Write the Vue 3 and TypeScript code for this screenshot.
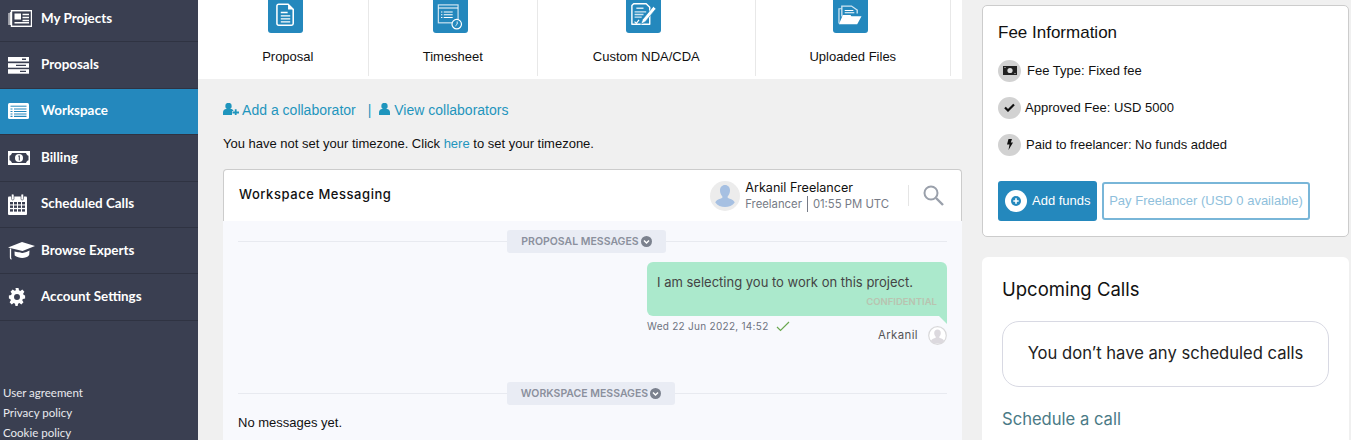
<script setup lang="ts">
const navItems = [
  { label: 'My Projects', icon: 'projects' },
  { label: 'Proposals', icon: 'proposals' },
  { label: 'Workspace', icon: 'workspace', active: true },
  { label: 'Billing', icon: 'billing' },
  { label: 'Scheduled Calls', icon: 'calendar' },
  { label: 'Browse Experts', icon: 'cap' },
  { label: 'Account Settings', icon: 'gear' },
]
const tabs = [
  { label: 'Proposal', icon: 'doc', cls: 'tab-a' },
  { label: 'Timesheet', icon: 'sheet', cls: 'tab-b' },
  { label: 'Custom NDA/CDA', icon: 'nda', cls: 'tab-c' },
  { label: 'Uploaded Files', icon: 'files', cls: 'tab-d' },
]
</script>

<template>
  <div class="page">
    <aside class="sidebar">
      <nav class="nav">
        <a v-for="item in navItems" :key="item.label" class="nav-item" :class="{ active: item.active }">
          <span class="nav-icon">
            <svg v-if="item.icon === 'projects'" width="24" height="17" viewBox="0 0 24 17">
              <rect x="3.5" y="0.7" width="20" height="15.6" fill="none" stroke="#fff" stroke-width="1.4" />
              <path d="M1 3v12M2.4 2v13" stroke="#fff" stroke-width="1" />
              <rect x="6.5" y="3.5" width="6.5" height="6" fill="#fff" />
              <path d="M14.5 4.5h6.5M14.5 7.5h6.5M14.5 10.5h6.5M6.5 12.8h14.5" stroke="#fff" stroke-width="1.5" />
            </svg>
            <svg v-else-if="item.icon === 'proposals'" width="22" height="17" viewBox="0 0 22 17">
              <rect y="0" width="21" height="4.5" fill="#fff" />
              <rect y="6.2" width="21" height="4.5" fill="#fff" />
              <rect y="12.2" width="21" height="4.5" fill="#fff" />
              <path d="M14 2.2h4M8 8.4h10M12 14.4h6" stroke="#3a3f51" stroke-width="1.4" />
            </svg>
            <svg v-else-if="item.icon === 'workspace'" width="21" height="16" viewBox="0 0 21 16">
              <rect width="21" height="16" rx="1.5" fill="#fff" />
              <path d="M2.5 3.2h16" stroke="#2488bd" stroke-width="1" />
              <path d="M6 6h12.5M6 8.5h12.5M6 11h12.5M6 13.3h12.5M2.5 6h2M2.5 8.5h2M2.5 11h2M2.5 13.3h2" stroke="#2488bd" stroke-width="1.2" />
            </svg>
            <svg v-else-if="item.icon === 'billing'" width="22" height="14" viewBox="0 0 22 14">
              <rect width="22" height="14" fill="#fff" />
              <path d="M4 2h14c.4 1.5 1.5 2.500 2.500 2.800v4.400c-1 .3-2.100 1.300-2.500 2.800H4c-.4-1.500-1.500-2.500-2.500-2.800V4.800C2.500 4.500 3.600 3.500 4 2z" fill="#3a3f51" />
              <circle cx="11" cy="7" r="4" fill="#fff" />
              <path d="M10.300 5.200l1-.5v4.800" stroke="#3a3f51" stroke-width="1" fill="none" />
            </svg>
            <svg v-else-if="item.icon === 'calendar'" width="19" height="21" viewBox="0 0 19 21">
              <rect y="2.500" width="19" height="18.500" rx="1" fill="#fff" />
              <rect x="3.500" y="0" width="2.500" height="6" rx="1.200" fill="#fff" stroke="#3a3f51" stroke-width=".6" />
              <rect x="13" y="0" width="2.500" height="6" rx="1.200" fill="#fff" stroke="#3a3f51" stroke-width=".6" />
              <g fill="#3a3f51">
                <rect x="2" y="8" width="3" height="2.400" /><rect x="6" y="8" width="3" height="2.400" /><rect x="10" y="8" width="3" height="2.400" /><rect x="14" y="8" width="3" height="2.400" />
                <rect x="2" y="11.500" width="3" height="2.400" /><rect x="6" y="11.500" width="3" height="2.400" /><rect x="10" y="11.500" width="3" height="2.400" /><rect x="14" y="11.500" width="3" height="2.400" />
                <rect x="2" y="15.200" width="3" height="2.400" /><rect x="6" y="15.200" width="3" height="2.400" /><rect x="10" y="15.200" width="3" height="2.400" /><rect x="14" y="15.200" width="3" height="2.400" />
              </g>
            </svg>
            <svg v-else-if="item.icon === 'cap'" width="27" height="18" viewBox="0 0 27 18">
              <path d="M0 5.500L14 0l13 4-12.500 5z" fill="#fff" />
              <path d="M6.500 9.500c3 .5 7 1.300 8 1.500 3-.7 5-1.300 7-2.500l-.3 4.500c-1.500 2.200-4.500 3-7 3-2.400 0-5.700-1-7.500-2.500z" fill="#fff" />
              <path d="M2.500 6.500v9c0 .8.500 1.500 1 1.500" stroke="#fff" stroke-width="1.300" fill="none" />
            </svg>
            <svg v-else width="18" height="18" viewBox="0 0 18 20">
              <path fill="#fff" fill-rule="evenodd" d="M7.300 0h3.400l.5 2.500 1.500.7 2.200-1.400 2.300 2.400-1.400 2.100.7 1.600L18 8.300v3.400l-2.500.5-.7 1.500 1.400 2.200-2.400 2.300-2.100-1.400-1.500.6-.5 2.500H7.300l-.5-2.500-1.500-.6-2.200 1.400-2.300-2.400 1.400-2.100-.7-1.500L0 11.700V8.300l2.500-.5.700-1.600-1.400-2.100 2.400-2.400 2.100 1.400 1.500-.7zM9 6.700a3.300 3.300 0 1 0 0 6.600 3.300 3.300 0 0 0 0-6.600z" />
            </svg>
          </span>
          <span class="nav-label">{{ item.label }}</span>
        </a>
      </nav>
      <div class="side-links">
        <a>User agreement</a>
        <a>Privacy policy</a>
        <a>Cookie policy</a>
      </div>
    </aside>

    <main class="main">
      <section class="tabs">
        <div v-for="tab in tabs" :key="tab.label" class="tab" :class="tab.cls">
          <span class="tile">
            <svg v-if="tab.icon === 'doc'" class="gap6" width="19" height="24" viewBox="0 0 22 28">
              <path d="M3 1.500h11l6 6V24a2 2 0 0 1-2 2H3a2 2 0 0 1-2-2V3.500a2 2 0 0 1 2-2z" fill="none" stroke="#fff" stroke-width="1.800" />
              <path d="M14 1.500v6h6z" fill="#fff" />
              <path d="M5.500 11h8M5.500 15h11M5.500 18.500h11M5.500 22h11" stroke="#fff" stroke-width="1.700" />
            </svg>
            <svg v-else-if="tab.icon === 'sheet'" class="gap3" width="26" height="26" viewBox="0 0 28 29">
              <rect x="1" y="1" width="22" height="20" fill="none" stroke="#cfe5f2" stroke-width="1.300" />
              <path d="M1 4.500h22M7 9h10M7 12h10M7 15h10M4 9h1.500M4 12h1.500M4 15h1.500" stroke="#fff" stroke-width="1.200" />
              <circle cx="21.500" cy="22.500" r="5.300" fill="#2488bd" stroke="#fff" stroke-width="1.300" />
              <path d="M22 19.500v3l-2 2" stroke="#fff" stroke-width="1" fill="none" />
            </svg>
            <svg v-else-if="tab.icon === 'nda'" class="gap6" width="27" height="25" viewBox="0 0 30 28">
              <path d="M4 2h14l4 4v19H2V4z" fill="none" stroke="#fff" stroke-width="1.600" stroke-linejoin="round" />
              <path d="M7 7h8M5 11h13M5 14h10M5 17h8" stroke="#cfe5f2" stroke-width="1.500" />
              <path d="M5 22l2 2 3-4" stroke="#fff" stroke-width="1.300" fill="none" />
              <path d="M26 5l3 2.500L17 22l-5 3 2-5.500z" fill="#fff" stroke="#2488bd" stroke-width=".7" />
            </svg>
            <svg v-else class="gap8" width="24" height="20" viewBox="0 1 25 26" preserveAspectRatio="none">
              <path d="M1 25V6h3" fill="none" stroke="#cfe5f2" stroke-width="1.300" />
              <path d="M4 16V2.500h10l6 5V12" fill="none" stroke="#cfe5f2" stroke-width="1.400" />
              <path d="M7 8h9M7 11h10" stroke="#fff" stroke-width="1.300" />
              <path d="M5 14h8l1 1.500h10.500L20 26H1z" fill="#fff" />
            </svg>
          </span>
          <span class="tab-label">{{ tab.label }}</span>
        </div>
      </section>

      <div class="collab">
        <a class="link">
          <svg width="16" height="12" viewBox="0 0 16 12"><circle cx="5.500" cy="3" r="3.200" fill="#1f95bd" /><path d="M0 12V9.500C0 7.500 1.500 6 3 6h5c1 0 2 .5 2.500 2H9v4z" fill="#1f95bd" /><path d="M9.500 9.500h6.500M12.700 6.300v5.700" stroke="#1f95bd" stroke-width="1.800" /></svg>
          Add a collaborator
        </a>
        <span class="pipe">|</span>
        <a class="link">
          <svg width="11" height="12" viewBox="0 0 11 12"><circle cx="5.500" cy="3" r="3.200" fill="#1f95bd" /><path d="M0 12V9.500C0 7.500 1.500 6 3 6h5c1.500 0 3 1.500 3 3.500V12z" fill="#1f95bd" /></svg>
          View collaborators
        </a>
      </div>
      <p class="tz">You have not set your timezone. Click <a class="link">here</a> to set your timezone.</p>

      <section class="messaging">
        <header class="msg-head">
          <h3>Workspace Messaging</h3>
          <div class="person">
            <span class="avatar">
              <svg width="30" height="30" viewBox="0 0 30 30">
                <circle cx="15" cy="15" r="15" fill="#ececec" />
                <path d="M15 4c3 0 5 2.300 5 5.500 0 2.500-1 4.500-2.300 5.800v1.700c2.500 1 6 1.500 7 4.500-2 3-6 4.500-9.700 4.500s-7.700-1.500-9.700-4.500c1-3 4.500-3.500 7-4.500v-1.700C11 14 10 12 10 9.500 10 6.300 12 4 15 4z" fill="#a6c0e2" />
              </svg>
            </span>
            <div class="person-text">
              <div class="person-name">Arkanil Freelancer</div>
              <div class="person-sub"><span class="role">Freelancer</span><span>01:55 PM UTC</span></div>
            </div>
          </div>
          <span class="search">
            <svg width="21" height="21" viewBox="0 0 21 21"><circle cx="8" cy="8" r="6.500" fill="none" stroke="#9aa0ab" stroke-width="2" /><path d="M13 13l7 7" stroke="#9aa0ab" stroke-width="2.400" /></svg>
          </span>
        </header>
        <div class="msg-body">
          <div class="divider first">
            <span class="pill">PROPOSAL MESSAGES
              <svg width="11" height="11" viewBox="0 0 11 11"><circle cx="5.500" cy="5.500" r="5.500" fill="#7b818e" /><path d="M3 4.500l2.500 2.500L8 4.500" stroke="#fff" stroke-width="1.500" fill="none" /></svg>
            </span>
          </div>
          <div class="bubble-row">
            <div class="bubble">
              <p>I am selecting you to work on this project.</p>
              <span class="conf">CONFIDENTIAL</span>
              <i class="tail"></i>
            </div>
          </div>
          <div class="meta">
            <div class="stamp">Wed 22 Jun 2022, 14:52
              <svg width="14" height="11" viewBox="0 0 14 11"><path d="M1 6l3.500 3.500L13 1" fill="none" stroke="#6aa84f" stroke-width="1.200" /></svg>
            </div>
            <div class="sender">
              <span>Arkanil</span>
              <svg width="19" height="19" viewBox="0 0 19 19"><circle cx="9.500" cy="9.500" r="9.500" fill="#fff" /><circle cx="9.500" cy="9.500" r="8.800" fill="#fff" stroke="#d8d8da" stroke-width="1.200" /><path d="M9.500 3.500c2 0 3.300 1.500 3.300 3.500 0 1.600-.8 3-1.500 3.700v1c1.800.7 3.700 1.300 4.700 2.800l-2 3h-9l-2-3c1-1.500 2.900-2.100 4.700-2.800v-1C7 10 6.200 8.600 6.200 7c0-2 1.300-3.500 3.300-3.500z" fill="#dcd9de" /></svg>
            </div>
          </div>
          <div class="divider second">
            <span class="pill">WORKSPACE MESSAGES
              <svg width="11" height="11" viewBox="0 0 11 11"><circle cx="5.500" cy="5.500" r="5.500" fill="#7b818e" /><path d="M3 4.500l2.500 2.500L8 4.500" stroke="#fff" stroke-width="1.500" fill="none" /></svg>
            </span>
          </div>
          <p class="empty">No messages yet.</p>
        </div>
      </section>
    </main>

    <aside class="right">
      <section class="fee">
        <h3>Fee Information</h3>
        <div class="fee-row">
          <span class="dot"><svg width="14" height="9" viewBox="0 0 14 9"><rect width="14" height="9" fill="#222" /><circle cx="7" cy="4.500" r="2.600" fill="#ddd" /><path d="M1.500 1.500h1M11.500 7.500h1" stroke="#ddd" /></svg></span>
          <span class="t1">Fee Type: Fixed fee</span>
        </div>
        <div class="fee-row">
          <span class="dot"><svg width="11" height="9" viewBox="0 0 11 9"><path d="M1 4.500l3 3L10 1.500" fill="none" stroke="#111" stroke-width="2.200" /></svg></span>
          <span>Approved Fee: USD 5000</span>
        </div>
        <div class="fee-row">
          <span class="dot"><svg width="6" height="11" viewBox="0 0 6 11"><path d="M1.500 0h3.500L3.800 3.500H6L1.500 11l1-5.500H0z" fill="#111" /></svg></span>
          <span class="t3">Paid to freelancer: No funds added</span>
        </div>
        <div class="fee-btns">
          <button class="add">
            <span class="plus"><svg width="22" height="22" viewBox="0 0 22 22"><circle cx="11" cy="11" r="11" fill="#fff" /><circle cx="11" cy="11" r="5" fill="#2488bd" /><path d="M8.300 11h5.400M11 8.300v5.400" stroke="#fff" stroke-width="1.600" /></svg></span>
            <span class="add-text">Add funds</span>
          </button>
          <button class="pay">Pay Freelancer (USD 0 available)</button>
        </div>
      </section>
      <section class="calls">
        <h3>Upcoming Calls</h3>
        <div class="no-calls">You don’t have any scheduled calls</div>
        <a class="schedule">Schedule a call</a>
      </section>
    </aside>
  </div>
</template>

<style>
html, body { margin: 0; padding: 0; height: 440px; overflow: hidden; background: #f0f0f0; }
</style>

<style scoped>
.page { display: flex; width: 1351px; height: 440px; overflow: hidden; background: #f0f0f0; font-family: "Liberation Sans", Arial, sans-serif; color: #111; }
.sidebar { width: 198px; flex: none; background: #3a3f51; display: flex; flex-direction: column; color: #fff; font-family: Lato, sans-serif; }
.nav { margin-top: -4px; }
.nav-item { display: flex; align-items: center; height: 45.4px; border-bottom: 1px solid #2f3342; font-size: 13.4px; font-weight: 700; color: #fff; }
.nav-item.active { background: #2488bd; }
.nav-icon { width: 41px; padding-left: 8px; box-sizing: border-box; display: flex; align-items: center; flex: none; }
.nav-label { margin-top: -2px; }
.side-links { margin-top: 62px; display: flex; flex-direction: column; padding-left: 3px; font-size: 11.5px; line-height: 20px; color: #e9eaee; }

.main { width: 764px; flex: none; display: flex; flex-direction: column; }
.tabs { display: flex; height: 79px; background: #fff; padding: 0 11px 0 10px; box-sizing: border-box; flex: none; }
.tab { height: 76px; display: flex; flex-direction: column; align-items: center; border-right: 1px solid #e8e8e8; box-sizing: border-box; font-size: 13px; }
.tab-a { width: 161px; }
.tab-b { width: 170px; }
.tab-c { width: 218px; }
.tab-d { width: 196px; }
.tile { width: 35px; height: 33px; margin-right: 5px; background: #2488bd; border-radius: 0 0 3px 3px; display: flex; align-items: flex-end; justify-content: center; overflow: hidden; }
.gap3 { margin-bottom: 3px; }
.gap6 { margin-bottom: 6px; }
.gap8 { margin-bottom: 8px; }
.tab-label { margin-top: 15px; line-height: 17px; color: #111; }

.collab { margin: 22px 0 0 25px; height: 18px; line-height: 18px; font-size: 14px; display: flex; align-items: center; }
.link { color: #1f95bd; }
.pipe { margin: 0 8px 0 12px; color: #1f95bd; }
.tz { margin: 16px 0 0 25px; font-size: 13px; line-height: 18px; }
.messaging { margin: 16px 0 0 25px; width: 739px; flex: none; }
.msg-head { height: 52px; box-sizing: border-box; background: #fff; border: 1px solid #ccc; border-bottom: 0; border-radius: 4px 4px 0 0; display: flex; align-items: center; padding-left: 15px; }
.msg-head h3 { margin: -3px 0 0; font: 500 13px Inter, sans-serif; letter-spacing: 0.55px; color: #111; }
.person { margin-left: auto; display: flex; align-items: center; gap: 5px; }
.avatar { display: flex; }
.person-name { font: 400 12.6px/16px Inter, sans-serif; color: #111; }
.person-sub { font: 400 11.3px/16px Inter, sans-serif; color: #767b86; display: flex; }
.role { border-right: 1px solid #767b86; padding-right: 5px; margin-right: 5px; }
.search { margin-left: 19px; width: 53px; box-sizing: border-box; height: 21px; border-left: 1px solid #e5e5e5; padding-left: 14px; display: flex; }
.msg-body { background: #f8f9fd; padding: 0 15px; height: 219px; box-sizing: border-box; overflow: hidden; }
.divider { display: flex; justify-content: center; position: relative; }
.divider::before { content: ""; position: absolute; left: 0; right: 0; top: 11px; border-top: 1px solid #e8eaf0; }
.divider.first { margin-top: 9px; }
.divider.first .pill { margin-right: 12px; }
.divider.second { margin-top: 37px; }
.divider.second .pill { margin-right: 3px; }
.pill { position: relative; display: inline-flex; align-items: center; gap: 2px; height: 23px; padding: 0 14px; background: #e9ecf4; border-radius: 3px; font: 600 10.5px Inter, sans-serif; color: #8b909d; }
.bubble-row { display: flex; justify-content: flex-end; margin-top: 9px; }
.bubble { position: relative; width: 300px; height: 54px; box-sizing: border-box; background: #abe9cc; border-radius: 6px 6px 0 6px; padding: 11px 10px; }
.bubble p { margin: 0; font: 400 13px/18px Inter, sans-serif; color: #444; }
.conf { position: absolute; right: 10px; bottom: 9px; font: 600 9.5px Inter, sans-serif; color: #b9c3b0; }
.tail { position: absolute; right: 0; top: 100%; width: 0; height: 0; border-top: 8px solid #abe9cc; border-left: 8px solid transparent; }
.meta { display: flex; justify-content: space-between; align-items: flex-start; width: 300px; margin-left: auto; }
.stamp { margin-top: 3px; font: 400 10px/14px Inter, sans-serif; letter-spacing: .28px; color: #6e7380; display: flex; align-items: center; gap: 7px; }
.sender { margin-top: 9px; font: 400 11.4px/20px Inter, sans-serif; letter-spacing: .4px; color: #555; display: flex; align-items: center; gap: 10px; }
.empty { margin: 8px 0 0; font-size: 13px; line-height: 20px; color: #111; }

.right { margin-left: 20px; width: 367px; flex: none; padding-top: 5px; }
.fee { height: 232px; box-sizing: border-box; background: #fff; border: 1px solid #ccc; border-radius: 5px; padding: 16px 15px 15px; }
.fee h3 { margin: 0 0 15px; font-size: 17px; line-height: 22px; font-weight: 400; color: #111; }
.fee-row { display: flex; align-items: center; height: 23px; margin-bottom: 14px; font-size: 13px; gap: 4px; }
.t1 { margin-left: 2px; }
.t3 { margin-left: 1px; }
.dot { width: 23px; height: 22px; border-radius: 50%; background: #d2d2d2; display: flex; align-items: center; justify-content: center; flex: none; }
.fee-btns { margin-top: 25px; display: flex; align-items: center; gap: 5px; }
.add { width: 99px; height: 40px; border: 0; border-radius: 3px; background: #2488bd; color: #fff; font: 13px "Liberation Sans", Arial, sans-serif; display: flex; align-items: center; gap: 5px; padding: 0 0 0 7px; }
.add-text { margin-top: -2px; }
.plus { display: flex; }
.pay { width: 208px; height: 38px; box-sizing: border-box; background: #fff; border: 2px solid #79b6d8; border-radius: 3px; color: #8fbfdc; font: 13px "Liberation Sans", Arial, sans-serif; padding: 0 0 2px; }
.calls { margin-top: 20px; height: 200px; box-sizing: border-box; background: #fff; border-radius: 6px; padding: 20px; font-family: Inter, sans-serif; }
.calls h3 { margin: 0; font-size: 18.5px; line-height: 24px; font-weight: 400; color: #111; }
.no-calls { margin-top: 20px; height: 66px; box-sizing: border-box; padding-bottom: 2px; border: 1px solid #d8d9e3; border-radius: 17px; display: flex; align-items: center; justify-content: center; font-size: 16.6px; color: #222; }
.schedule { display: block; margin-top: 21px; font-size: 16.6px; line-height: 22px; color: #4a7a86; }
</style>
